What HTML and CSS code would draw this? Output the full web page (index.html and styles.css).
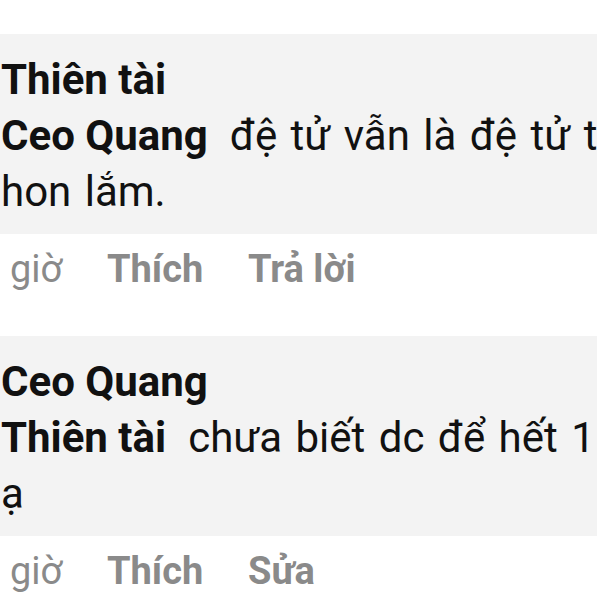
FILE: index.html
```html
<!DOCTYPE html>
<html lang="vi">
<head>
  <meta charset="UTF-8" />
  <title>Bình luận</title>
  <link rel="stylesheet" href="styles.css">
</head>
<body>
  <div class="comment">
    <div class="bubble">
      <div class="line name">Thiên tài</div>
      <div class="line"><span class="tag">Ceo Quang</span>đệ tử vẫn là đệ tử t</div>
      <div class="line">hon lắm.</div>
    </div>
    <div class="actions">
      <span class="time">giờ</span>
      <span class="act">Thích</span>
      <span class="act">Trả lời</span>
    </div>
  </div>

  <div class="comment">
    <div class="bubble">
      <div class="line name">Ceo Quang</div>
      <div class="line"><span class="tag">Thiên tài</span>chưa biết dc để hết 1</div>
      <div class="line">ạ</div>
    </div>
    <div class="actions">
      <span class="time">giờ</span>
      <span class="act">Thích</span>
      <span class="act">Sửa</span>
    </div>
  </div>
</body>
</html>
```

FILE: styles.css
```css
body {
  margin: 0;
  background: #fff;
  font-family: Roboto, "Noto Sans", sans-serif;
  color: #111;
  overflow: hidden;
}
.comment {
  padding-top: 34px;
}
.comment + .comment {
  padding-top: 43px;
}
.bubble {
  background: #f3f3f3;
  width: 597px;
  height: 200px;
  box-sizing: border-box;
  padding-top: 18px;
}
.line {
  font-size: 42px;
  line-height: 56px;
  white-space: nowrap;
  word-spacing: 3px;
  margin-left: 1px;
}
.name {
  font-weight: 700;
  word-spacing: 0;
}
.tag {
  font-weight: 700;
  word-spacing: 0;
  margin-right: 22px;
}
.actions {
  display: flex;
  padding-top: 11px;
  padding-left: 10px;
  font-size: 38px;
  line-height: 48px;
  color: #8a8a8a;
}
.time {
  width: 97px;
}
.act {
  font-weight: 700;
  width: 141px;
}
```
